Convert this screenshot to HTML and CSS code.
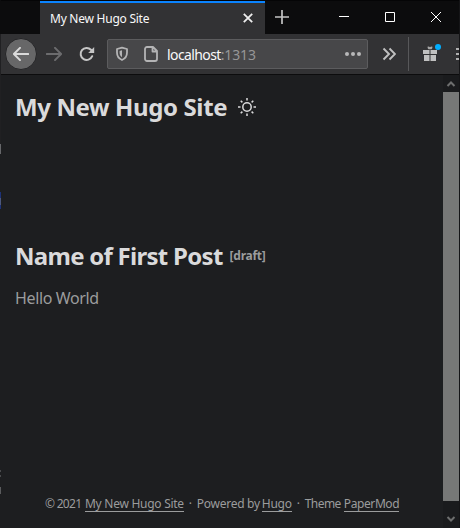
FILE: index.html
```html
<!DOCTYPE html>
<html lang="en">
<head>
<meta charset="utf-8">
<title>My New Hugo Site</title>
<link rel="stylesheet" href="styles.css">
</head>
<body>
<div class="window">
  <div class="tabstrip">
    <div class="tab"><span class="tab-title">My New Hugo Site</span>
      <svg class="tab-close" width="10" height="10" viewBox="0 0 10 10"><path d="M.8.8l8.4 8.4M9.2.8L.8 9.2" stroke="#eee" stroke-width="1.8"/></svg>
    </div>
    <svg class="new-tab" width="14" height="14" viewBox="0 0 14 14"><path d="M7 0v14M0 7h14" stroke="#c4c4c4" stroke-width="1.7"/></svg>
    <div class="controls">
      <svg width="10" height="10" viewBox="0 0 10 10"><path d="M0 4.5h10" stroke="#fff"/></svg>
      <svg width="10" height="10" viewBox="0 0 10 10"><path d="M.5.5h9v9h-9z" stroke="#fff" fill="none"/></svg>
      <svg width="10" height="10" viewBox="0 0 10 10"><path d="M0 0l10 10M10 0L0 10" stroke="#fff"/></svg>
    </div>
  </div>
  <div class="toolbar">
    <div class="back"><svg width="16" height="14" viewBox="0 0 16 14"><path d="M15.300 7H1M7 .9L.9 7 7 13.100" stroke="#dadada" stroke-width="2" fill="none" stroke-linecap="round" stroke-linejoin="round"/></svg></div>
    <svg class="forward" width="16" height="14" viewBox="0 0 16 14"><path d="M.7 7H15M9 .9L15.100 7 9 13.100" stroke="#6c6c6e" stroke-width="2" fill="none" stroke-linecap="round" stroke-linejoin="round"/></svg>
    <svg class="reload" width="16" height="16" viewBox="0 0 16 16"><path d="M13.200 10.200A6 6 0 1 1 12 3.800l1.500 1.600" stroke="#c6c6c6" stroke-width="2" fill="none" stroke-linecap="round"/><path d="M15.200 1v6H9.200z" fill="#c6c6c6"/></svg>
    <div class="urlbar">
      <svg class="shield" width="14" height="16" viewBox="0 0 14 16"><path d="M7 1.600L12 3v3.600c0 3.600-1.800 6.100-5 7.400-3.200-1.300-5-3.800-5-7.400V3z" stroke="#b4b4b5" stroke-width="1.800" fill="none" stroke-linejoin="round"/><path d="M7 4.300v7C5.300 10.200 4.600 8.700 4.600 6.600V5z" fill="#b4b4b5"/></svg>
      <svg class="page-icon" width="14" height="16" viewBox="0 0 14 16"><path d="M3 1h6l4 4v8a2 2 0 0 1-2 2H3a2 2 0 0 1-2-2V3a2 2 0 0 1 2-2zM8.500 1.500V5.500H12.500" stroke="#b4b4b5" stroke-width="1.800" fill="none" stroke-linejoin="round"/></svg>
      <span class="url">localhost<span class="port">:1313</span></span>
      <svg class="dots" width="16" height="4" viewBox="0 0 16 4"><g fill="#b8b8b9"><circle cx="2" cy="2" r="2"/><circle cx="8" cy="2" r="2"/><circle cx="14" cy="2" r="2"/></g></svg>
    </div>
    <svg class="overflow" width="14" height="14" viewBox="0 0 14 14"><path d="M1.500 1.500L7 7l-5.500 5.500M7.500 1.500L13 7l-5.500 5.500" stroke="#c0c0c0" stroke-width="1.900" fill="none"/></svg>
    <div class="divider"></div>
    <svg class="gift" width="20" height="18" viewBox="0 0 20 18"><path d="M0 6h6.500v4H0zM7.500 6H14v4H7.500zM1 11h5.500v6H1zM7.500 11H13v6H7.500z" fill="#c0c0c0"/><path d="M4.500 2.700Q6 2 7 3.300Q8 2 9.500 2.700Q9.500 4.500 8.500 5.300h-3Q4.500 4.500 4.500 2.700z" fill="#a8a8a8"/><circle cx="15" cy="3" r="3" fill="#00aeff"/></svg>
    <svg class="menu" width="3" height="12" viewBox="0 0 3 12"><path d="M0 1h3M0 6h3M0 11h3" stroke="#b0b0b0" stroke-width="2"/></svg>
  </div>
  <div class="viewport">
    <div class="page">
      <header><span class="logo">My New Hugo Site</span>
        <svg class="sun" width="20" height="20" viewBox="0 0 20 20"><g stroke="#dadadb" stroke-width="1.500" fill="none"><circle cx="10" cy="10" r="4.200"/><path d="M10 1v2.500M10 16.500V19M1 10h2.500M16.500 10H19M3.700 3.700l1.700 1.700M14.600 14.600l1.700 1.700M16.300 3.700l-1.700 1.700M5.400 14.600l-1.700 1.700"/></g></svg>
      </header>
      <main>
        <h2><span class="post-title">Name of First Post</span><span class="draft">[draft]</span></h2>
        <p>Hello World</p>
      </main>
      <footer><span class="copyright">© 2021</span><a>My New Hugo Site</a><span class="dot">·</span><span>Powered by</span><a class="engine">Hugo</a><span class="dot">·</span><span class="theme">Theme</span><a class="theme-link">PaperMod</a></footer>
    </div>
    <div class="scrollbar">
      <svg width="16" height="17" viewBox="0 0 16 17"><path d="M4.500 11L8 7.500l3.500 3.500" stroke="#6d6e6e" stroke-width="2" fill="none"/></svg>
      <div class="thumb"></div>
      <svg width="16" height="27" viewBox="0 0 16 27"><path d="M4.500 16L8 19.500l3.500-3.500" stroke="#6d6e6e" stroke-width="2" fill="none"/></svg>
    </div>
  </div>
</div>
</body>
</html>
```
FILE: styles.css
```css
* { box-sizing: border-box; }
body { margin: 0; background: #1d1e20; font-family: "Noto Sans", "Open Sans", sans-serif; overflow: hidden; }
svg { display: block; flex: none; }
.window { width: 460px; height: 528px; display: flex; flex-direction: column; padding: 0 1px; white-space: nowrap;
  background: linear-gradient(#0c0c0d 0 34px, #202022 34px 144px, #66676a 144px 154px, #1d1e20 154px 192px, #1d3278 192px 198px, #4d587c 198px 205px, #1d3278 205px 209px, #1d1e20 209px 470px, #4a4b4d 470px 472px, #1d1e20 472px 475px, #4a4b4d 475px 477px, #1d1e20 477px 487px, #5a5b5d 487px 494px, #1d1e20 494px) left / 1px 100% no-repeat #151517; }
.tabstrip { height: 34px; flex: none; background: #0c0c0d; display: flex; align-items: center; border-top: 1px solid #050506; }
.tab { width: 225px; height: 33px; margin-left: 39px; background: #323234; border-top: 2px solid #0a84ff; display: flex; align-items: center; padding: 0 12px 0 10px; justify-content: space-between; }
.tab-title { font-size: 12px; line-height: 18px; letter-spacing: -0.25px; color: #f9f9fa; }
.tab-close { margin-top: -1px; }
.new-tab { margin: -1px 0 0 10px; }
.controls { display: flex; gap: 36px; margin: -1px 18px 0 auto; }
.toolbar { height: 41px; flex: none; background: #323234; border-bottom: 1px solid #0c0c0d; display: flex; align-items: center; padding-left: 4px; }
.back { width: 32px; height: 32px; border-radius: 50%; background: #676768; border: 1px solid #252527; display: flex; align-items: center; justify-content: center; }
.forward { margin-left: 9px; }
.reload { margin-left: 17px; }
.urlbar { width: 261px; height: 30px; margin-left: 12px; background: #474749; border: 1px solid #5c5c5e; border-radius: 2px; display: flex; align-items: center; padding: 0 6px 0 7px; }
.page-icon { margin-left: 15px; }
.url { margin: 2px 0 0 9px; font-size: 14px; letter-spacing: -0.6px; color: #f9f9fa; line-height: 20px; }
.port { color: #969697; letter-spacing: -0.15px; }
.dots { margin-left: auto; }
.overflow { margin-left: 14px; }
.divider { width: 1px; height: 34px; background: #58585a; margin-left: 12px; }
.gift { margin: -3px 0 0 14px; }
.menu { margin-left: auto; }
.viewport { flex: 1; display: flex; min-height: 0; }
.page { width: 442px; display: flex; flex-direction: column; background: #1d1e20; color: #9b9c9d; }
header { height: 60px; padding: 4px 0 0 14px; display: flex; align-items: center; }
.logo { font-size: 24px; font-weight: 700; line-height: 36px; letter-spacing: -0.38px; color: #dadadb; }
.sun { margin: -1px 0 0 10px; }
main { padding: 103px 0 0 14px; flex: 1; }
h2 { margin: 0; font-size: 24px; line-height: 36px; color: #dadadb; display: flex; }
.post-title { letter-spacing: -0.72px; }
.draft { font-size: 12px; margin-left: 7px; line-height: 35px; letter-spacing: -0.25px; color: #9b9c9d; }
p { margin: 12px 0 0; font-size: 16px; line-height: 24px; letter-spacing: -0.37px; }
footer { height: 32px; padding-left: 44px; font-size: 12px; display: flex; align-items: flex-start; line-height: 16px; letter-spacing: -0.27px; }
footer span { margin-left: 5px; }
footer a { border-bottom: 1px solid #9b9c9d; height: 16px; margin-left: 4px; }
footer .copyright { width: 36px; margin: 0; letter-spacing: -0.7px; }
footer .dot { margin-left: 5px; }
footer .engine { margin-left: 2px; }
footer .theme { margin-left: 5px; letter-spacing: -0.55px; }
footer .theme-link { margin-left: 3px; letter-spacing: -0.4px; }
.scrollbar { width: 16px; background: #1a1b1d; }
.thumb { height: 409px; background: #777877; }
```
